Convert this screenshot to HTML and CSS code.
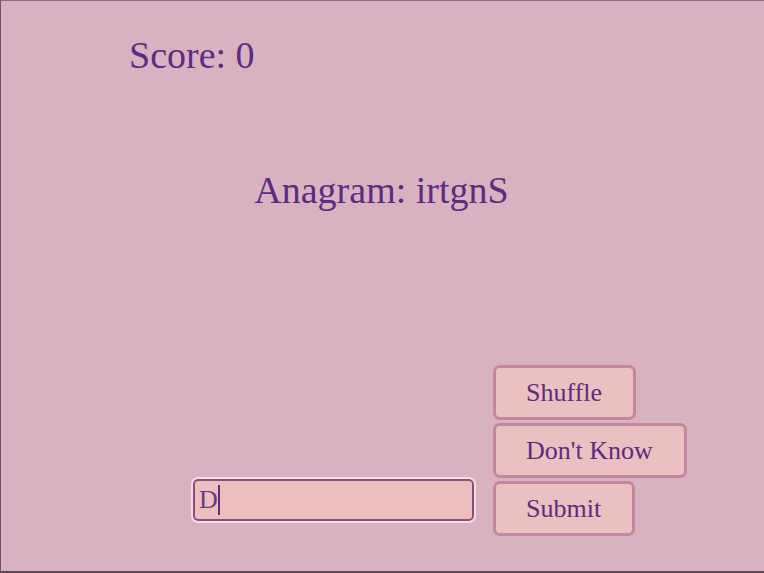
FILE: index.html
```html
<!DOCTYPE html>
<html>
<head>
<meta charset="utf-8">
<link rel="stylesheet" href="styles.css">
</head>
<body>
<div class="app">
  <div class="score">Score: 0</div>
  <div class="anagram">Anagram: irtgnS</div>
  <div class="controls">
    <div class="field"><span class="typed">D</span><span class="caret"></span></div>
    <div class="buttons">
      <button class="btn">Shuffle</button>
      <button class="btn">Don't Know</button>
      <button class="btn">Submit</button>
    </div>
  </div>
</div>
</body>
</html>
```
FILE: styles.css
```css
html, body {
  margin: 0;
  padding: 0;
}
body {
  font-family: "Liberation Serif", "Times New Roman", serif;
  color: #5e2b7e;
  background: #d9b2c2;
}
.app {
  height: 573px;
  box-sizing: border-box;
  border-top: 1px solid #8a7080;
  border-left: 1px solid #6e5464;
  border-bottom: 2px solid #5e4856;
  background: #d9b2c2;
  display: flex;
  flex-direction: column;
}
.score {
  font-size: 38px;
  line-height: 44px;
  margin: 32px 0 0 128px;
}
.anagram {
  font-size: 38px;
  line-height: 44px;
  margin-top: 91px;
  text-align: center;
  padding-right: 2px;
}
.controls {
  display: flex;
  align-items: flex-end;
  margin-top: auto;
  margin-bottom: 35px;
  padding-left: 190px;
  gap: 19px;
}
.field {
  width: 273px;
  height: 38px;
  box-sizing: content-box;
  background: #ecbebe;
  border: 2px solid #8a4c7c;
  border-radius: 5px;
  outline: 2px solid #f3dde0;
  outline-offset: 0;
  margin: 0 0 15px 2px;
  display: flex;
  align-items: center;
  padding-left: 4px;
  font-size: 26px;
}
.typed {
  color: #6a3a86;
  line-height: 30px;
}
.caret {
  width: 2px;
  height: 30px;
  background: #5e2b7e;
}
.buttons {
  display: flex;
  flex-direction: column;
  align-items: flex-start;
  gap: 3px;
}
.btn {
  font-family: "Liberation Serif", "Times New Roman", serif;
  font-size: 26px;
  line-height: 30px;
  color: #5e2b7e;
  background: #ebc0c0;
  border: 3px solid #c4879e;
  border-radius: 7px;
  padding: 10px 31px 9px 30px;
  margin: 0;
}
```
